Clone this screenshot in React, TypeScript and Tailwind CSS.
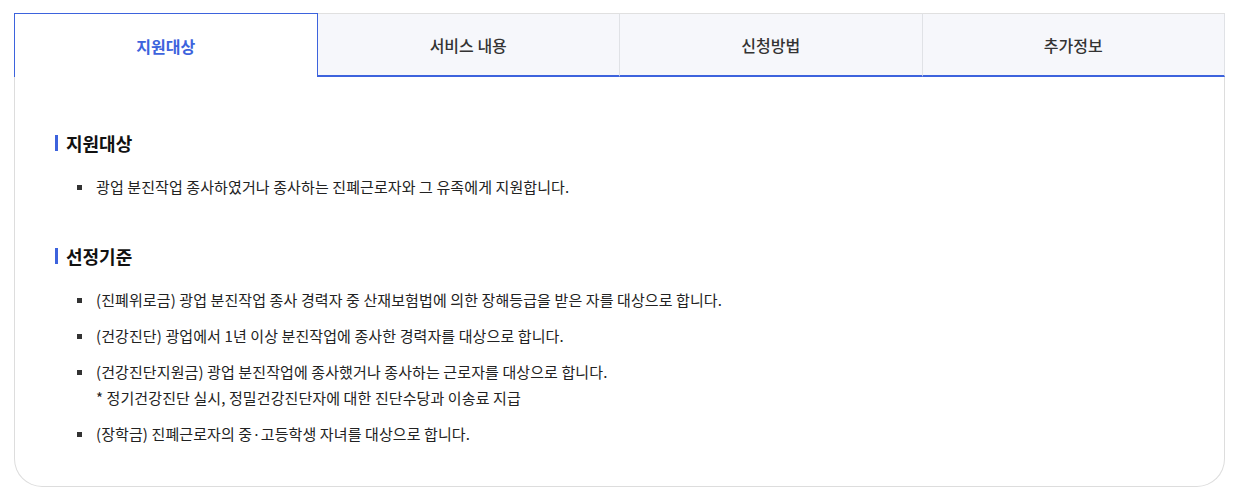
const tabs = ['지원대상', '서비스 내용', '신청방법', '추가정보']

const sections: { title: string; items: { text: string; note?: string }[] }[] = [
  {
    title: '지원대상',
    items: [{ text: '광업 분진작업 종사하였거나 종사하는 진폐근로자와 그 유족에게 지원합니다.' }],
  },
  {
    title: '선정기준',
    items: [
      { text: '(진폐위로금) 광업 분진작업 종사 경력자 중 산재보험법에 의한 장해등급을 받은 자를 대상으로 합니다.' },
      { text: '(건강진단) 광업에서 1년 이상 분진작업에 종사한 경력자를 대상으로 합니다.' },
      {
        text: '(건강진단지원금) 광업 분진작업에 종사했거나 종사하는 근로자를 대상으로 합니다.',
        note: '* 정기건강진단 실시, 정밀건강진단자에 대한 진단수당과 이송료 지급',
      },
      { text: '(장학금) 진폐근로자의 중·고등학생 자녀를 대상으로 합니다.' },
    ],
  },
]

export default function App() {
  return (
    <div
      className="min-h-[499px] bg-white pt-[13px] pl-[14px]"
      style={{ fontFamily: '"Noto Sans CJK KR", "Noto Sans", sans-serif' }}
    >
      <div className="w-[1211px] rounded-b-[28px] border-x border-b border-[#dddddd]">
        {/* Tabs */}
        <div className="-mx-px flex">
          {tabs.map((tab, i) =>
            i === 0 ? (
              <div
                key={tab}
                className="flex h-[64px] flex-1 items-center justify-center border-x border-t border-[#3d63dd] bg-white text-[16px] font-bold text-[#3d63dd]"
              >
                {tab}
              </div>
            ) : (
              <div
                key={tab}
                className="flex h-[64px] flex-1 items-center justify-center border-t border-r border-b-2 border-t-[#e0e0e0] border-r-[#e0e2e6] border-b-[#3d63dd] bg-[#f6f7fb] text-[16px] font-medium text-[#333333]"
              >
                {tab}
              </div>
            ),
          )}
        </div>

        {/* Content */}
        <div className="flex flex-col gap-[43px] px-[40px] pt-[53px] pb-[39px]">
          {sections.map((s) => (
            <div key={s.title} className="flex flex-col gap-[18px]">
              <h3 className="flex items-center gap-[8px] text-[18px] leading-[26px] font-bold text-[#111111]">
                <span className="h-[16px] w-[3px] bg-[#3d63dd]" />
                {s.title}
              </h3>
              <ul className="flex flex-col gap-[10px] pl-[22px]">
                {s.items.map((item) => (
                  <li key={item.text} className="flex text-[15px] leading-[26px] tracking-[0.1px] text-[#222222]">
                    <span className="mt-[11px] mr-[14px] h-[5px] w-[5px] shrink-0 bg-[#333333]" />
                    <div>
                      <p>{item.text}</p>
                      {item.note && <p>{item.note}</p>}
                    </div>
                  </li>
                ))}
              </ul>
            </div>
          ))}
        </div>
      </div>
    </div>
  )
}
